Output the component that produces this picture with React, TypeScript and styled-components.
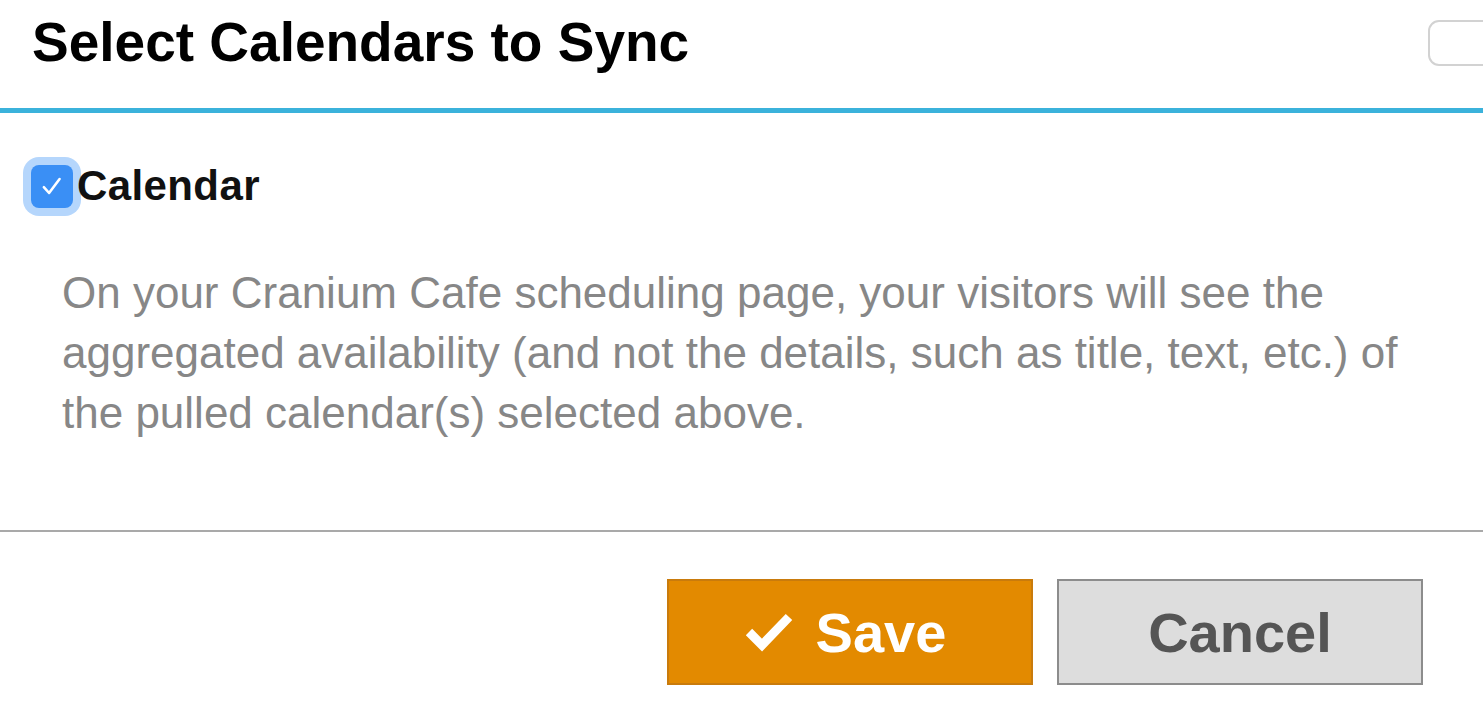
import * as React from "react";
import styled, { createGlobalStyle } from "styled-components";

const GlobalStyle = createGlobalStyle`
	html, body {
		margin: 0;
		padding: 0;
		background: #ffffff;
		overflow: hidden;
	}
	body {
		font-family: "Liberation Sans", Arial, Helvetica, sans-serif;
	}
`;

const Dialog = styled.div`
	width: 1483px;
	height: 711px;
	overflow: hidden;
	background: #fff;
	display: flex;
	flex-direction: column;
`;

const Header = styled.div`
	box-sizing: border-box;
	height: 113px;
	padding: 15px 0 0 32px;
	border-bottom: 5px solid #3bb2db;
	display: flex;
	align-items: flex-start;
	justify-content: space-between;
`;

const Title = styled.h1`
	margin: 0;
	font-size: 55px;
	line-height: 55px;
	font-weight: 700;
	color: #000;
`;

const CloseBox = styled.button`
	box-sizing: border-box;
	margin: 5px -20px 0 0;
	width: 75px;
	height: 46px;
	border: 2px solid #d2d2d2;
	border-radius: 11px;
	background: #fff;
	padding: 0;
`;

const Body = styled.div`
	box-sizing: border-box;
	height: 419px;
	padding: 48px 40px 0 31px;
	border-bottom: 2px solid #a9a9a9;
`;

const CheckRow = styled.label`
	display: flex;
	align-items: center;
	gap: 4px;
	cursor: pointer;
`;

const CheckBox = styled.span<{ checked: boolean }>`
	box-sizing: border-box;
	width: 42px;
	height: 43px;
	border-radius: 8px;
	background: ${p => (p.checked ? "#3a8ff5" : "#fff")};
	box-shadow: 0 0 0 8px rgba(120, 180, 250, 0.55);
	display: flex;
	align-items: center;
	justify-content: center;
	svg {
		width: 28px;
		height: 28px;
	}
`;

const CheckLabel = styled.span`
	font-size: 42px;
	font-weight: 700;
	letter-spacing: 0.4px;
	color: #111;
	line-height: 50px;
`;

const Note = styled.p`
	margin: 52px 0 0 31px;
	font-size: 44px;
	line-height: 60px;
	color: #878787;
`;

const Footer = styled.div`
	display: flex;
	justify-content: flex-end;
	gap: 24px;
	padding: 47px 60px 0 0;
`;

const Button = styled.button<{ primary?: boolean }>`
	box-sizing: border-box;
	width: 366px;
	height: 106px;
	display: flex;
	align-items: center;
	justify-content: center;
	gap: 20px;
	font-family: "Liberation Sans", Arial, Helvetica, sans-serif;
	font-size: 56px;
	font-weight: 700;
	border: 2px solid ${p => (p.primary ? "#c97b0c" : "#8c8c8c")};
	background: ${p => (p.primary ? "#e38a00" : "#dddddd")};
	color: ${p => (p.primary ? "#ffffff" : "#555555")};
	padding: 0;
	cursor: pointer;
	svg {
		width: 54px;
		height: 44px;
		margin-left: -12px;
	}
`;

export default function App() {
	const [checked, setChecked] = React.useState(true);

	return (
		<Dialog>
			<GlobalStyle />
			<Header>
				<Title>Select Calendars to Sync</Title>
				<CloseBox aria-label="Close" />
			</Header>
			<Body>
				<CheckRow onClick={() => setChecked(c => !c)}>
					<CheckBox checked={checked}>
						{checked && (
							<svg viewBox="0 0 24 24" fill="none">
								<path
									d="M5 13 L9.5 18 L18.5 6"
									stroke="#fff"
									strokeWidth="2.2"
									strokeLinecap="round"
									strokeLinejoin="round"
								/>
							</svg>
						)}
					</CheckBox>
					<CheckLabel>Calendar</CheckLabel>
				</CheckRow>
				<Note>
					On your Cranium Cafe scheduling page, your visitors will see the
					aggregated availability (and not the details, such as title, text,
					etc.) of the pulled calendar(s) selected above.
				</Note>
			</Body>
			<Footer>
				<Button primary>
					<svg viewBox="0 0 54 44" fill="none">
						<path
							d="M7 22 L20 35 L47 7"
							stroke="#fff"
							strokeWidth="9"
							strokeLinejoin="miter"
						/>
					</svg>
					Save
				</Button>
				<Button>Cancel</Button>
			</Footer>
		</Dialog>
	);
}
